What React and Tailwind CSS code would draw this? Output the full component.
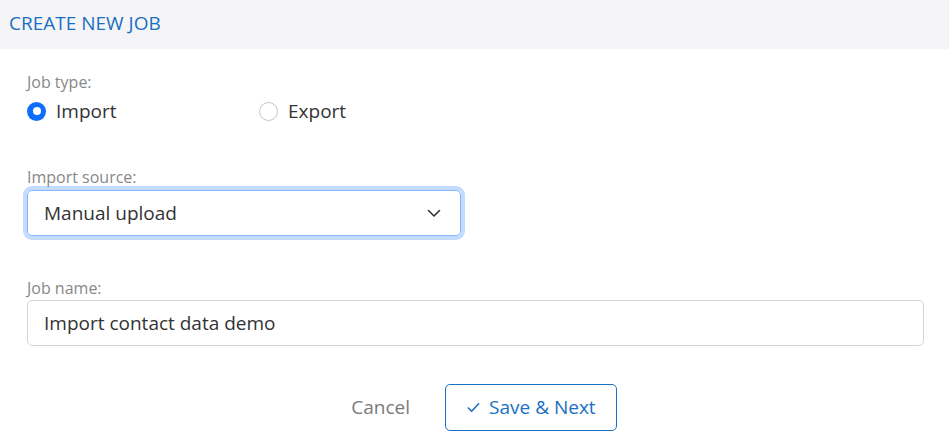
import { useState } from 'react';

const font = { fontFamily: '"Open Sans", "Noto Sans", sans-serif' };

export default function App() {
  const [jobType, setJobType] = useState('import');
  const [jobName, setJobName] = useState('Import contact data demo');

  return (
    <div className="w-[949px] h-[444px] bg-white" style={font}>
      {/* Header */}
      <div className="h-[49px] bg-[#f5f5f7] flex items-center px-[9px] pb-[3px]">
        <h2 className="text-[19px] text-[#1a6fc2]">CREATE NEW JOB</h2>
      </div>

      <div className="pl-[27px] pr-[25px] pt-[22px]">
        {/* Job type */}
        <div className="text-[16px] text-[#888] leading-[22px]">Job type:</div>
        <div className="flex items-center h-[36px]">
          <label className="flex items-center w-[232px] cursor-pointer" onClick={() => setJobType('import')}>
            <span
              className={`w-[19px] h-[19px] rounded-full flex items-center justify-center ${
                jobType === 'import' ? 'bg-[#0d6efd]' : 'border border-[#c6c6c6] bg-white'
              }`}
            >
              {jobType === 'import' && <span className="w-[8px] h-[8px] rounded-full bg-white" />}
            </span>
            <span className="ml-[10px] text-[19px] text-[#333]">Import</span>
          </label>
          <label className="flex items-center cursor-pointer" onClick={() => setJobType('export')}>
            <span
              className={`w-[19px] h-[19px] rounded-full flex items-center justify-center ${
                jobType === 'export' ? 'bg-[#0d6efd]' : 'border border-[#c6c6c6] bg-white'
              }`}
            >
              {jobType === 'export' && <span className="w-[8px] h-[8px] rounded-full bg-white" />}
            </span>
            <span className="ml-[10px] text-[19px] text-[#333]">Export</span>
          </label>
        </div>

        {/* Import source */}
        <div className="mt-[37px] text-[16px] text-[#888] leading-[22px]">Import source:</div>
        <div className="mt-[2px] w-[434px] h-[46px] rounded-[5px] border border-[#86b7fe] ring-4 ring-[#c2dbfe] flex items-center justify-between pl-[16px] pr-[18px]">
          <span className="text-[19px] text-[#333]">Manual upload</span>
          <svg width="16" height="16" viewBox="0 0 16 16" fill="none" stroke="#333" strokeWidth="1.6" strokeLinecap="round" strokeLinejoin="round">
            <path d="M2.5 5.5 8 11l5.5-5.5" />
          </svg>
        </div>

        {/* Job name */}
        <div className="mt-[41px] text-[16px] text-[#888] leading-[22px]">Job name:</div>
        <input
          value={jobName}
          onChange={(e) => setJobName(e.target.value)}
          className="mt-[1px] w-full h-[46px] rounded-[5px] border border-[#d0d5da] px-[16px] text-[19px] text-[#333] outline-none"
        />

        {/* Actions */}
        <div className="mt-[38px] flex justify-center items-center gap-[18px]">
          <button className="px-[17px] h-[47px] text-[19px] text-[#7a7a7a]">Cancel</button>
          <button className="h-[47px] px-[20px] rounded-[5px] border border-[#1a6fc2] text-[#1a6fc2] text-[19px] flex items-center gap-[8px]">
            <svg width="15" height="15" viewBox="0 0 16 16" fill="none" stroke="#1a6fc2" strokeWidth="1.7" strokeLinecap="round" strokeLinejoin="round">
              <path d="M2.5 8.5 6 12l7.5-8" />
            </svg>
            Save &amp; Next
          </button>
        </div>
      </div>
    </div>
  );
}
